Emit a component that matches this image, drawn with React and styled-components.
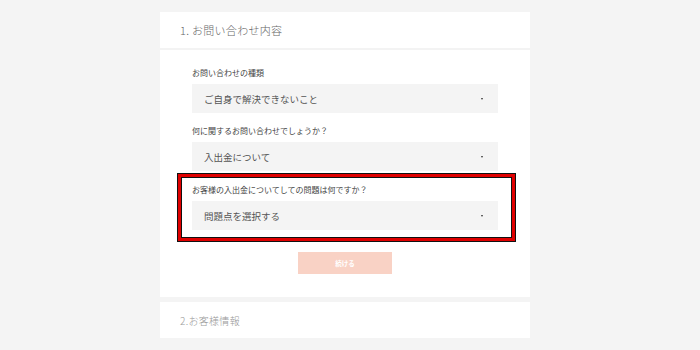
import React from "react";
import styled, { createGlobalStyle } from "styled-components";

const Global = createGlobalStyle`
  html, body { margin: 0; padding: 0; background: #f4f4f4; }
  body { font-family: "Noto Sans CJK JP", "Noto Sans", sans-serif; }
`;

const Page = styled.div`
  width: 700px;
  height: 350px;
  overflow: hidden;
  padding: 12px 0 0 160px;
  box-sizing: border-box;
`;

const Card = styled.section`
  width: 370px;
  background: #fff;
  margin-bottom: 5px;
`;

const CardHeader = styled.div`
  height: 36px;
  display: flex;
  align-items: center;
  padding-left: 20px;
  font-size: ${(p) => p.$size || 11}px;
  font-weight: 300;
  color: ${(p) => p.$color || "#666"};
  border-bottom: ${(p) => (p.$divider ? "2px solid #f3f3f3" : "none")};
  letter-spacing: 0.3px;
`;

const CardBody = styled.div`
  padding: 18px 32px 23px;
  display: flex;
  flex-direction: column;
`;

const Field = styled.div`
  display: flex;
  flex-direction: column;
  gap: 6px;
  margin-bottom: ${(p) => p.$mb || 0}px;
`;

const Label = styled.div`
  font-size: 8px;
  line-height: 10px;
  height: 10px;
  color: #444;
  font-weight: 400;
`;

const Select = styled.div`
  height: 29px;
  background: #f4f4f4;
  display: flex;
  align-items: center;
  justify-content: space-between;
  padding: 0 15px 0 12px;
  font-size: 9.5px;
  font-weight: 400;
  color: #555;
`;

const Caret = styled.span`
  width: 0;
  height: 0;
  border-left: 1.5px solid transparent;
  border-right: 1.5px solid transparent;
  border-top: 2.5px solid #333;
`;

const Highlight = styled.div`
  margin: 0 -18px 0 -15px;
  border: 1px solid #111;
  box-shadow: inset 0 0 0 3px #e00000, inset 0 0 0 4px #111;
  padding: 11px 17px 11px 14px;
`;

const Button = styled.button`
  align-self: center;
  margin-top: 10px;
  width: 94px;
  height: 22px;
  border: none;
  background: #f9d2c5;
  color: #fff;
  font-family: inherit;
  font-size: 6.5px;
  font-weight: bold;
  padding: 0;
`;

const SelectField = ({ label, value, mb }) => (
  <Field $mb={mb}>
    <Label>{label}</Label>
    <Select>
      <span>{value}</span>
      <Caret />
    </Select>
  </Field>
);

export default function App() {
  return (
    <>
      <Global />
      <Page>
        <Card>
          <CardHeader $divider>1. お問い合わせ内容</CardHeader>
          <CardBody>
            <SelectField label="お問い合わせの種類" value="ご自身で解決できないこと" mb={13} />
            <SelectField label="何に関するお問い合わせでしょうか？" value="入出金について" mb={2} />
            <Highlight>
              <SelectField label="お客様の入出金についてしての問題は何ですか？" value="問題点を選択する" />
            </Highlight>
            <Button>続ける</Button>
          </CardBody>
        </Card>
        <Card>
          <CardHeader $size={10} $color="#999">2.お客様情報</CardHeader>
        </Card>
      </Page>
    </>
  );
}
